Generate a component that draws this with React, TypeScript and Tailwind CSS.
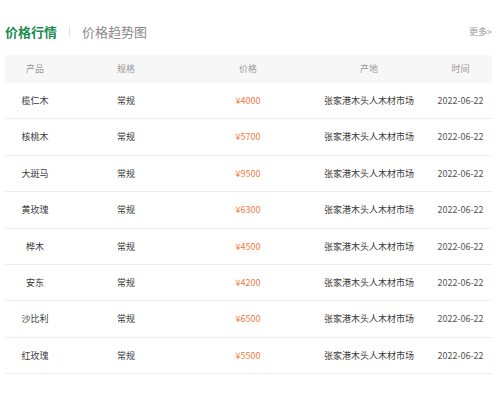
const rows = [
  { name: '榄仁木', price: '¥4000' },
  { name: '核桃木', price: '¥5700' },
  { name: '大斑马', price: '¥9500' },
  { name: '黄玫瑰', price: '¥6300' },
  { name: '桦木', price: '¥4500' },
  { name: '安东', price: '¥4200' },
  { name: '沙比利', price: '¥6500' },
  { name: '红玫瑰', price: '¥5500' },
];

const font = { fontFamily: '"Noto Sans CJK SC", "Liberation Sans", sans-serif' };

export default function App() {
  return (
    <div className="w-[500px] h-[394px] bg-white pl-[5px] pr-[8px] pt-[21px]" style={font}>
      <div className="flex items-center h-[20px]">
        <span className="text-[13px] font-bold text-[#1a8c50] leading-none">价格行情</span>
        <span className="mx-[12px] w-px h-[11px] bg-[#e2e2e2]" />
        <span className="text-[13px] text-[#8a8a8a] leading-none">价格趋势图</span>
        <span className="ml-auto text-[9px] text-[#999] leading-none">更多&gt;</span>
      </div>

      <div className="mt-[14px] flex h-[28px] items-center bg-[#f7f7f7] text-[9px] text-[#999]">
        <div className="w-[60px] text-center">产品</div>
        <div className="w-[122px] text-center">规格</div>
        <div className="w-[122px] text-center">价格</div>
        <div className="w-[120px] text-center">产地</div>
        <div className="w-[63px] text-center">时间</div>
      </div>

      {rows.map((r) => (
        <div
          key={r.name}
          className="flex h-[36.4px] items-center border-b border-[#ededed] text-[9px] text-[#3a3a3a]"
        >
          <div className="w-[60px] text-center">{r.name}</div>
          <div className="w-[122px] text-center">常规</div>
          <div className="w-[122px] text-center text-[#f4793b]">{r.price}</div>
          <div className="w-[120px] text-center">张家港木头人木材市场</div>
          <div className="w-[63px] text-center text-[#555]">2022-06-22</div>
        </div>
      ))}
    </div>
  );
}
